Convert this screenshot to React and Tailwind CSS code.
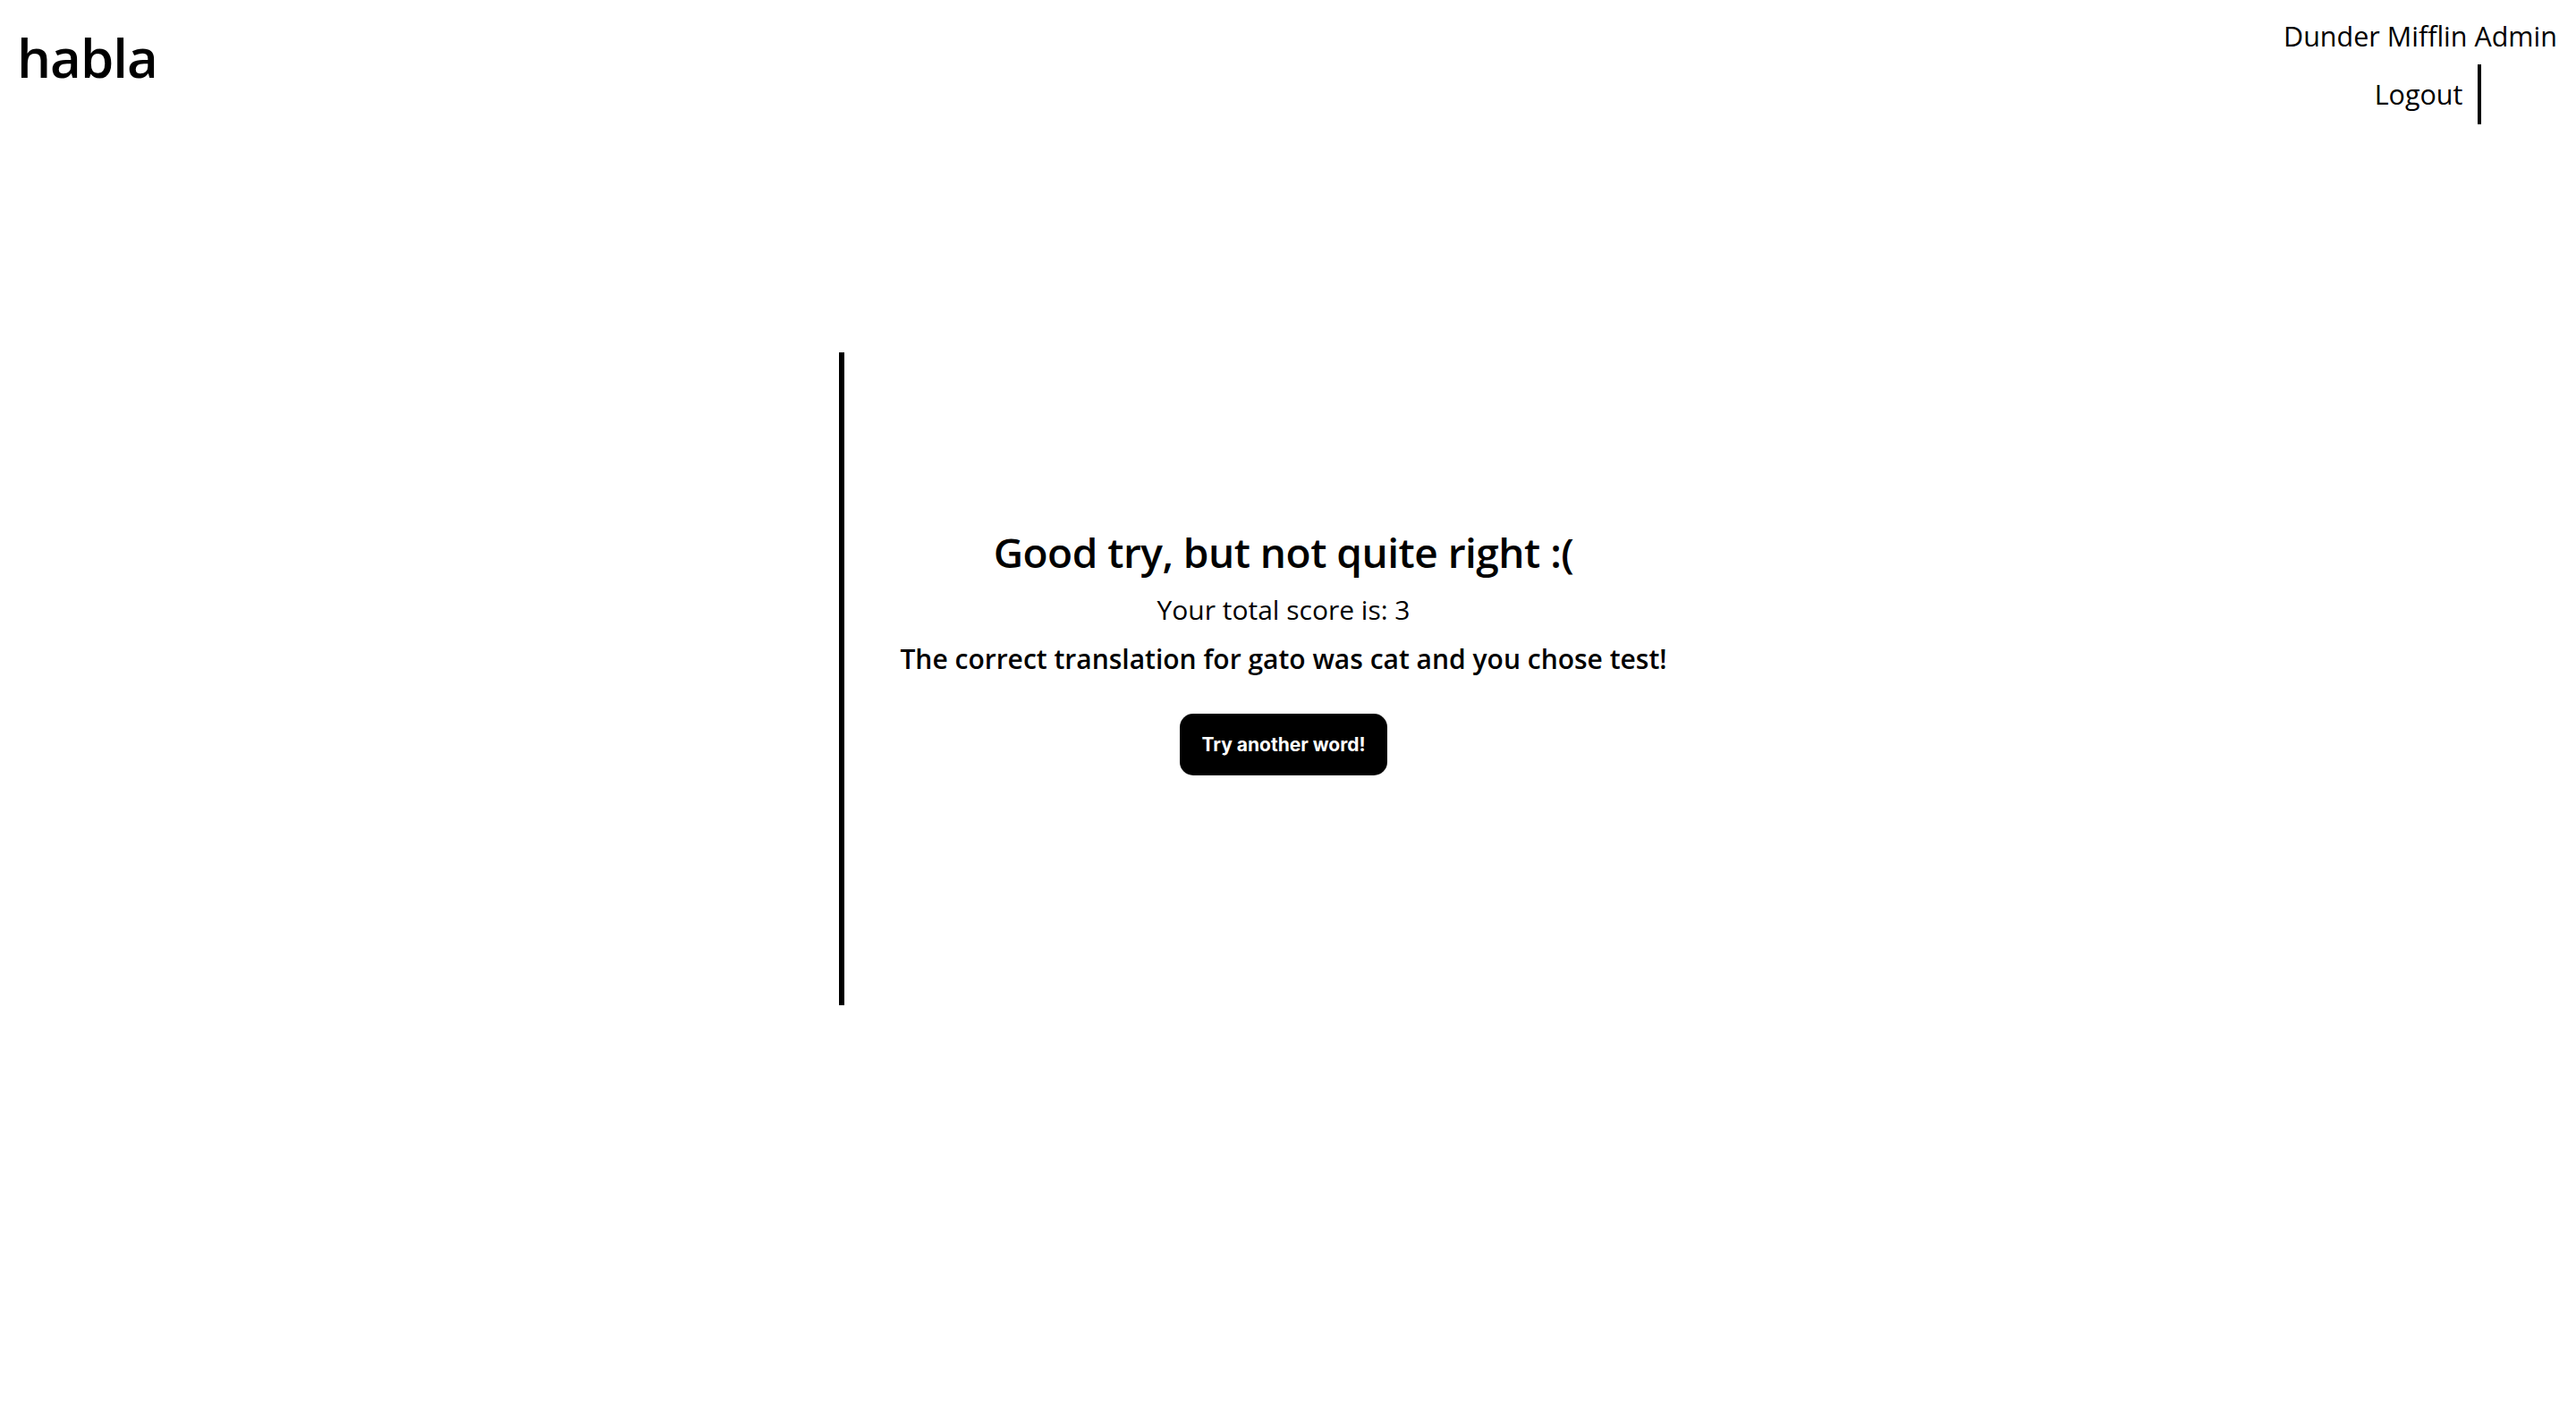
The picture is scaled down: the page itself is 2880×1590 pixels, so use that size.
import React from 'react';

const App = () => {
  return (
    <div className="min-h-screen w-full bg-white text-black font-['Open_Sans','Noto_Sans',sans-serif]">
      {/* top bar */}
      <header className="flex items-start justify-between pl-[19px] pr-[21px] pt-[14px]">
        <h1 className="mt-[6px] text-[60px] leading-[88px] font-semibold tracking-[-1px]">habla</h1>
        <div className="flex flex-col items-center pt-[6px]">
          <span className="text-[30.5px] leading-[40px] font-medium">Dunder Mifflin Admin</span>
          <button className="mt-[12px] h-[67px] px-[17px] border-r-4 border-black text-[30.5px] font-medium leading-none">
            Logout
          </button>
        </div>
      </header>

      {/* result card */}
      <main className="flex justify-start pl-[938px] pt-[255px]">
        <section className="w-[988px] h-[730px] border-l-[6px] border-black flex flex-col items-center pt-[195px]">
          <h2 className="text-[46px] leading-[56px] font-semibold tracking-[-0.5px]">Good try, but not quite right :(</h2>
          <p className="mt-[19px] text-[30px] leading-[36px] font-normal">Your total score is: 3</p>
          <p className="mt-[19px] text-[30px] leading-[36px] font-semibold">
            The correct translation for gato was cat and you chose test!
          </p>
          <button className="mt-[43px] h-[69px] w-[232px] rounded-[15px] bg-black text-white text-[21px] font-bold font-['Inter',sans-serif]">
            Try another word!
          </button>
        </section>
      </main>
    </div>
  );
};

export default App;
